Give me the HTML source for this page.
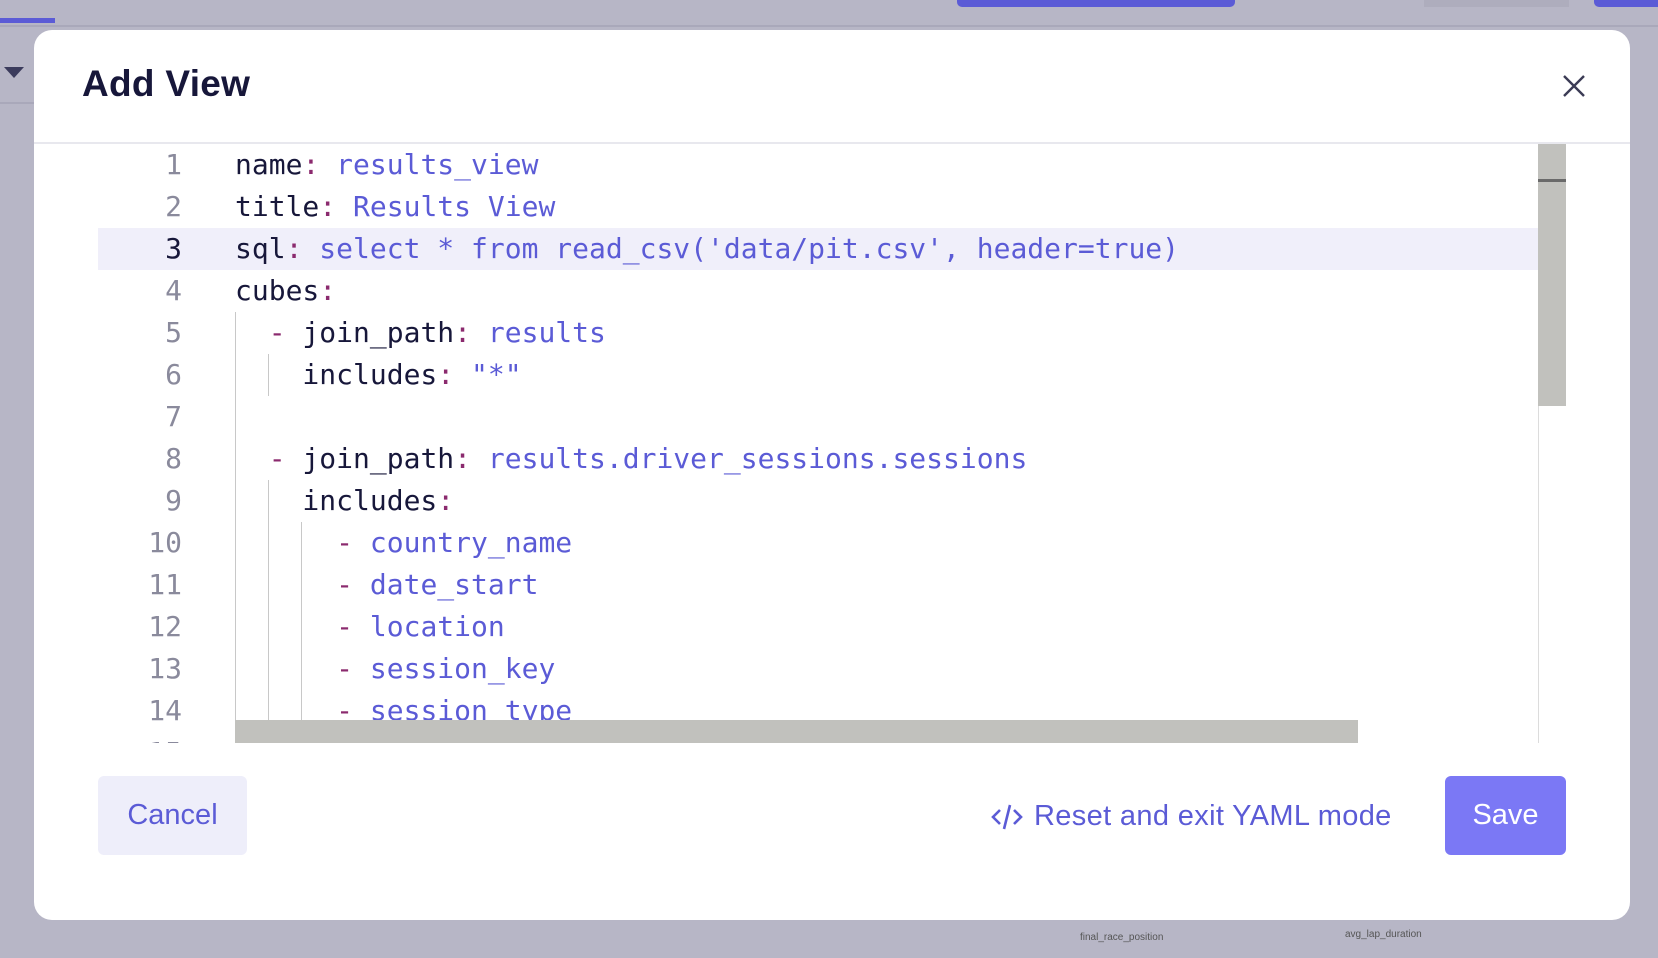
<!DOCTYPE html>
<html><head><meta charset="utf-8"><style>
*{margin:0;padding:0;box-sizing:border-box}
body{width:1658px;height:958px;background:#b7b6c6;position:relative;overflow:hidden;font-family:"Liberation Sans",sans-serif}
.modal{position:absolute;left:34px;top:30px;width:1596px;height:890px;background:#fff;border-radius:18px;overflow:hidden}
.title{position:absolute;left:48px;top:33px;font-size:37px;font-weight:bold;color:#17173a;letter-spacing:0.3px}
.hdr{position:absolute;left:0;right:0;top:112px;height:2px;background:#e8e8ee}
.ed{position:absolute;left:64px;top:114px;width:1468px;height:599px;overflow:hidden;background:#fff}
.ln{position:absolute;left:0;width:84px;height:42px;text-align:right;font:28px/42px "DejaVu Sans Mono",monospace;color:#8a8a9c}
.cd{position:absolute;left:137px;height:42px;white-space:pre;font:28px/42px "DejaVu Sans Mono",monospace;color:#17173a}
.v{color:#5b5bd6}.c{color:#8b2a6e}
.g{position:absolute;width:1px;background:#c8c8c8}
.btn{position:absolute;top:746px;height:79px;border-radius:6px;font-size:29px;line-height:79px;text-align:center}
</style></head><body>
<div style="position:absolute;left:0;top:18px;width:55px;height:5px;background:#5b5bd6"></div>
<div style="position:absolute;left:0;top:25px;width:1658px;height:2px;background:#a9a8ba"></div>
<div style="position:absolute;left:957px;top:0;width:278px;height:7px;background:#5b5bd6;border-radius:0 0 5px 5px"></div>
<div style="position:absolute;left:1424px;top:0;width:145px;height:7px;background:#aeadbd"></div>
<div style="position:absolute;left:1594px;top:0;width:64px;height:7px;background:#5b5bd6;border-radius:0 0 0 5px"></div>
<div style="position:absolute;left:4px;top:67px;width:0;height:0;border-left:10px solid transparent;border-right:10px solid transparent;border-top:11px solid #3b3b5c"></div>
<div style="position:absolute;left:0;top:102px;width:34px;height:2px;background:#a9a8ba"></div>
<div style="position:absolute;left:1080px;top:932px;font-size:10px;color:#555">final_race_position</div>
<div style="position:absolute;left:1345px;top:929px;font-size:10px;color:#555">avg_lap_duration</div>
<div class="modal">
<div class="title">Add View</div>
<svg style="position:absolute;left:1528px;top:44px" width="24" height="24" viewBox="0 0 24 24"><path d="M2 2L22 22M22 2L2 22" stroke="#3b3b55" stroke-width="2.4" fill="none"/></svg>
<div class="hdr"></div>
<div class="ed">
<div style="position:absolute;left:0;top:84px;width:1468px;height:42px;background:#f0effa"></div>
<div class="g" style="left:137px;top:168px;height:440px"></div>
<div class="g" style="left:170px;top:210px;height:42px"></div>
<div class="g" style="left:170px;top:336px;height:270px"></div>
<div class="g" style="left:203px;top:378px;height:230px"></div>
<div class="ln" style="top:0">1</div><div class="cd" style="top:0">name<span class="c">:</span> <span class="v">results_view</span></div>
<div class="ln" style="top:42px">2</div><div class="cd" style="top:42px">title<span class="c">:</span> <span class="v">Results View</span></div>
<div class="ln" style="top:84px;color:#17173a">3</div><div class="cd" style="top:84px">sql<span class="c">:</span> <span class="v">select * from read_csv('data/pit.csv', header=true)</span></div>
<div class="ln" style="top:126px">4</div><div class="cd" style="top:126px">cubes<span class="c">:</span></div>
<div class="ln" style="top:168px">5</div><div class="cd" style="top:168px">  <span class="c">-</span> join_path<span class="c">:</span> <span class="v">results</span></div>
<div class="ln" style="top:210px">6</div><div class="cd" style="top:210px">    includes<span class="c">:</span> <span class="v">"*"</span></div>
<div class="ln" style="top:252px">7</div>
<div class="ln" style="top:294px">8</div><div class="cd" style="top:294px">  <span class="c">-</span> join_path<span class="c">:</span> <span class="v">results.driver_sessions.sessions</span></div>
<div class="ln" style="top:336px">9</div><div class="cd" style="top:336px">    includes<span class="c">:</span></div>
<div class="ln" style="top:378px">10</div><div class="cd" style="top:378px">      <span class="c">-</span> <span class="v">country_name</span></div>
<div class="ln" style="top:420px">11</div><div class="cd" style="top:420px">      <span class="c">-</span> <span class="v">date_start</span></div>
<div class="ln" style="top:462px">12</div><div class="cd" style="top:462px">      <span class="c">-</span> <span class="v">location</span></div>
<div class="ln" style="top:504px">13</div><div class="cd" style="top:504px">      <span class="c">-</span> <span class="v">session_key</span></div>
<div class="ln" style="top:546px">14</div><div class="cd" style="top:546px">      <span class="c">-</span> <span class="v">session_type</span></div>
<div class="ln" style="top:588px">15</div><div class="cd" style="top:588px">      <span class="c">-</span> <span class="v">year</span></div>
<div style="position:absolute;left:137px;top:576px;width:1123px;height:23px;background:#c1c1bd"></div>
<div style="position:absolute;left:1440px;top:0;width:1px;height:599px;background:#dcdcdc"></div>
<div style="position:absolute;left:1440px;top:0;width:28px;height:262px;background:#c1c1bd"></div>
<div style="position:absolute;left:1440px;top:35px;width:28px;height:3px;background:#6a6a6a"></div>
</div>
<div class="btn" style="left:64px;width:149px;background:#eeeefa;color:#5b5bd6">Cancel</div>
<svg style="position:absolute;left:956px;top:772px" width="34" height="30" viewBox="0 0 34 30"><path d="M10 8L3 15L10 22M24 8L31 15L24 22M20 3L14 27" stroke="#5b5bd6" stroke-width="2.6" fill="none"/></svg>
<div style="position:absolute;left:1000px;top:747px;line-height:79px;font-size:29px;color:#5b5bd6;letter-spacing:0.35px">Reset and exit YAML mode</div>
<div class="btn" style="left:1411px;width:121px;background:#7b78f5;color:#fff">Save</div>
</div>
</body></html>
